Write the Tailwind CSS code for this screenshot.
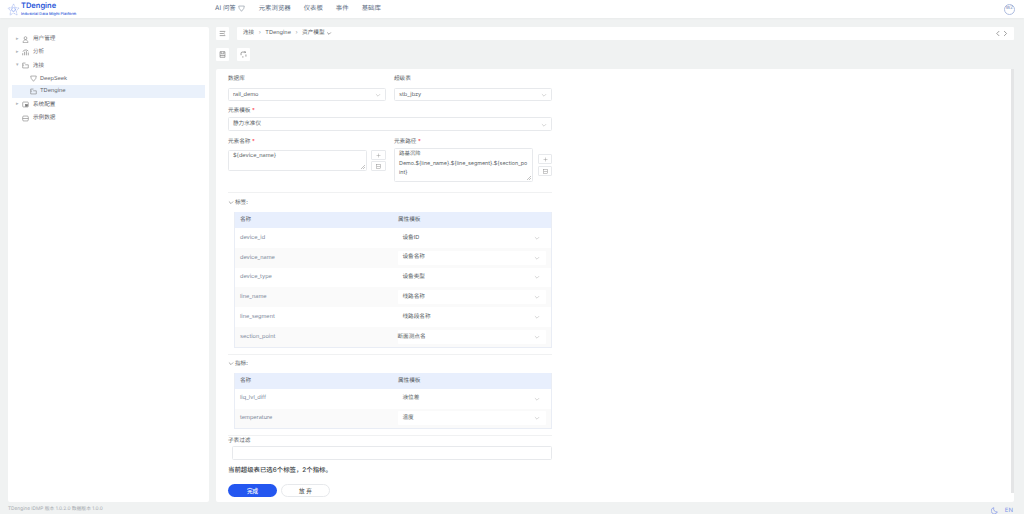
<!DOCTYPE html>
<html lang="zh">
<head>
<meta charset="UTF-8">
<title>TDengine IDMP</title>
<script src="https://cdn.jsdelivr.net/npm/@tailwindcss/browser@4"></script>
</head>
<body class="h-[514px] w-[1024px] overflow-hidden bg-[#f0f2f2] font-['Inter','Noto_Sans_CJK_SC',sans-serif] text-[5.6px] text-[#5a5f66] [text-rendering:geometricPrecision]">

<!-- header -->
<header class="flex h-[18px] items-center bg-white shadow-[0_1px_2px_rgba(0,0,0,0.03)]">
  <div class="flex w-[215px] items-center gap-[1px] pl-[7px]">
    <svg class="h-[13px] w-[13px]" viewBox="0 0 14 14" fill="none" stroke="#9fb2ee" stroke-width="0.8" stroke-dasharray="1.200 0.600"><path d="M7 1 9 5l4 .5-3 3 .8 4.500L7 10.800 3.200 13l.8-4.500-3-3L5 5z"/><circle cx="7" cy="7" r="2" stroke="#4d74ea"/></svg>
    <div class="leading-none">
      <div class="text-[7.500px] leading-[8px] font-semibold text-[#2a56d8]">TDengine</div>
      <div class="mt-[1px] text-[3.900px] leading-[5px] font-medium text-[#2a56d8]">Industrial Data Might Platform</div>
    </div>
  </div>
  <nav class="flex items-center gap-[13px] text-[6.400px] text-[#5b6b7f]">
    <span class="mr-[1px] flex items-center gap-[2px]">AI 问答
      <svg class="h-[7px] w-[7px]" viewBox="0 0 10 10" fill="none" stroke="#7b8794" stroke-width="0.8"><path d="M1 1.500h8L8.200 5 5 9 1.800 5z"/></svg>
    </span>
    <span>元素浏览器</span><span>仪表板</span><span>事件</span><span>基础库</span>
  </nav>
  <div class="ml-auto mr-[9px] flex h-[11px] w-[11px] items-center justify-center rounded-full border-[0.800px] border-[#aebde0] text-[4.500px] text-[#6f83b5]">WZ</div>
</header>

<div class="flex h-[484px] pl-[8px] pt-[9px]">
  <!-- sidebar -->
  <aside class="h-[475px] w-[201px] rounded-[2px] bg-white px-[4px] pt-[5.500px] text-[#5f646b]">
    <div class="flex h-[13px] items-center pl-[4px] pt-[1px]"><span class="w-[6px] text-[5px] text-[#b0b5ba]">▸</span>
      <svg class="mr-[4px] h-[7px] w-[7px]" viewBox="0 0 10 10" fill="none" stroke="#777" stroke-width="0.8"><circle cx="5" cy="3" r="2"/><path d="M1.500 9.500c0-2.500 1.500-4 3.500-4s3.500 1.500 3.500 4z"/></svg>用户管理</div>
    <div class="flex h-[13.500px] items-center pl-[4px]"><span class="w-[6px] text-[5px] text-[#b0b5ba]">▸</span>
      <svg class="mr-[4px] h-[7px] w-[7px]" viewBox="0 0 10 10" fill="none" stroke="#777" stroke-width="0.9"><path d="M1 9V6M3.700 9V4M6.300 9V3M9 9V5M1 3.500 4 1.500l3 0 2 1.500"/></svg>分析</div>
    <div class="flex h-[13.500px] items-center pl-[4px]"><span class="w-[6px] text-[5px] text-[#b0b5ba]">▾</span>
      <svg class="mr-[4px] h-[7px] w-[7px]" viewBox="0 0 10 10" fill="none" stroke="#777" stroke-width="0.8"><path d="M1 1.500h4M1 1.500v7h8V4H4.500M1 4.500h2"/></svg>连接</div>
    <div class="flex h-[12.500px] items-center pl-[18px]">
      <svg class="mr-[3px] h-[7px] w-[7px]" viewBox="0 0 10 10" fill="none" stroke="#777" stroke-width="0.8"><path d="M1 1.500h8L8.200 5 5 9 1.800 5z"/></svg>DeepSeek</div>
    <div class="flex h-[13px] items-center bg-[#eaf1fb] pl-[18px]">
      <svg class="mr-[3px] h-[7px] w-[7px]" viewBox="0 0 10 10" fill="none" stroke="#777" stroke-width="0.8"><path d="M1 1.500h4M1 1.500v7h8V4H4.500M1 4.500h2"/></svg>TDengine</div>
    <div class="flex h-[13.500px] items-center pl-[4px]"><span class="w-[6px] text-[5px] text-[#b0b5ba]">▸</span>
      <svg class="mr-[4px] h-[7px] w-[7px]" viewBox="0 0 10 10" fill="none" stroke="#777" stroke-width="0.8"><rect x="1" y="1.500" width="8" height="7" rx="1"/><rect x="5" y="5" width="3" height="2.500" fill="#777"/></svg>系统配置</div>
    <div class="flex h-[13.500px] items-center pl-[10px]">
      <svg class="mr-[4px] h-[7px] w-[7px]" viewBox="0 0 10 10" fill="none" stroke="#777" stroke-width="0.8"><rect x="1" y="1.500" width="8" height="7" rx="1.500"/><path d="M1 5h8"/></svg>示例数据</div>
  </aside>

  <main class="ml-[7px] w-[798px]">
    <!-- breadcrumb row -->
    <div class="flex h-[13px] gap-[8px]">
      <button class="flex w-[13px] items-center justify-center rounded-[1px] bg-white">
        <svg class="h-[7px] w-[7px]" viewBox="0 0 10 10" fill="none" stroke="#666" stroke-width="0.8"><path d="M1 2h8M1 5h5M1 8h8M8 4l-1.500 1L8 6"/></svg>
      </button>
      <div class="flex flex-1 items-center rounded-[1px] bg-white pl-[6px] pr-[5px]">
        <span>连接</span><span class="mx-[4.500px] text-[#9aa0a6]">›</span><span>TDengine</span><span class="mx-[4.500px] text-[#9aa0a6]">›</span><span>资产模型</span>
        <svg class="ml-[2px] h-[6px] w-[6px]" viewBox="0 0 10 10" fill="none" stroke="#555" stroke-width="1"><path d="M2 2.500l3 3 3-3"/></svg>
        <svg class="ml-auto h-[7px] w-[14px]" viewBox="0 0 20 10" fill="none" stroke="#777" stroke-width="1"><path d="M6 1.500 2.500 5 6 8.500M13 1.500 16.500 5 13 8.500"/></svg>
      </div>
    </div>
    <!-- toolbar -->
    <div class="mt-[8px] flex h-[13px] gap-[8px]">
      <button class="flex w-[13px] items-center justify-center rounded-[1px] bg-white">
        <svg class="h-[7px] w-[7px]" viewBox="0 0 10 10" fill="none" stroke="#666" stroke-width="0.8"><path d="M1.500 1h7v8h-7zM3 1v3h4V1M1.500 6.500h7"/></svg>
      </button>
      <button class="flex w-[13px] items-center justify-center rounded-[1px] bg-white">
        <svg class="h-[7px] w-[7px]" viewBox="0 0 10 10" fill="none" stroke="#666" stroke-width="0.9"><path d="M1.500 6V3.500A2 2 0 0 1 3.500 1.500H8M6.500.5 8 1.500 6.500 3M8.500 5v3M5 8.500H3"/></svg>
      </button>
    </div>

    <!-- form card -->
    <section class="relative mt-[8px] h-[433px] w-[798px] rounded-[2px] bg-white pl-[12px] pt-[5px]">
      <div class="absolute right-0 top-0 h-[424px] w-[3.500px] bg-[#e4e5e6]"></div>
      <div class="w-[324px]">

        <div class="flex gap-[8px]">
          <div class="w-[158px]">
            <div class="h-[14px] leading-[11px]">数据库</div>
            <div class="flex h-[13px] items-center justify-between rounded-[1.500px] border border-[#e7e9ec] px-[4px] pt-[1px]">rail_demo
              <svg class="h-[6px] w-[6px]" viewBox="0 0 10 10" fill="none" stroke="#aaa" stroke-width="0.8"><path d="M1.500 3.500 5 7l3.500-3.500"/></svg></div>
          </div>
          <div class="w-[158px]">
            <div class="h-[14px] leading-[11px]">超级表</div>
            <div class="flex h-[13px] items-center justify-between rounded-[1.500px] border border-[#e7e9ec] px-[4px] pt-[1px]">stb_jbzy
              <svg class="h-[6px] w-[6px]" viewBox="0 0 10 10" fill="none" stroke="#aaa" stroke-width="0.8"><path d="M1.500 3.500 5 7l3.500-3.500"/></svg></div>
          </div>
        </div>

        <div class="mt-[5px] h-[11px] leading-[11px]">元素模板 <span class="text-red-500">*</span></div>
        <div class="flex h-[14px] items-center justify-between rounded-[1.500px] border border-[#e7e9ec] px-[4px] pt-[1px]">静力水准仪
          <svg class="h-[6px] w-[6px]" viewBox="0 0 10 10" fill="none" stroke="#aaa" stroke-width="0.8"><path d="M1.500 3.500 5 7l3.500-3.500"/></svg></div>

        <div class="mt-[6px] flex gap-[8px]">
          <div class="w-[158px]">
            <div class="h-[12px] leading-[11px]">元素名称 <span class="text-red-500">*</span></div>
            <div class="flex">
              <div class="relative mt-[1px] h-[21px] w-[139px] rounded-[1.500px] border border-[#e7e9ec] px-[4px] pt-[1px] leading-[9px]">${device_name}
                <svg class="absolute bottom-[1px] right-[1px] h-[4px] w-[4px]" viewBox="0 0 4 4" stroke="#888" stroke-width="0.5"><path d="M0 4 4 0M2 4l2-2"/></svg></div>
              <div class="ml-[4px] mt-[1px] flex w-[15px] flex-col gap-[1px]">
                <div class="flex h-[10px] items-center justify-center rounded-[1px] border border-[#e7e9ec]"><svg class="h-[5px] w-[5px]" viewBox="0 0 10 10" stroke="#888" stroke-width="0.8"><path d="M5 1v8M1 5h8"/></svg></div>
                <div class="flex h-[10px] items-center justify-center rounded-[1px] border border-[#e7e9ec]"><svg class="h-[5px] w-[5px]" viewBox="0 0 10 10" fill="none" stroke="#888" stroke-width="0.9"><rect x="1.500" y="1.500" width="7" height="7"/><path d="M1.500 5h7"/></svg></div>
              </div>
            </div>
          </div>
          <div class="w-[158px]">
            <div class="h-[11px] leading-[11px]">元素路径 <span class="text-red-500">*</span></div>
            <div class="flex">
              <div class="relative h-[34px] w-[139px] rounded-[1.500px] border border-[#e7e9ec] px-[4px] pt-[1px] text-[5.400px] leading-[9.500px] break-all">路基沉降<br>Demo.${line_name}.${line_segment}.${section_point}
                <svg class="absolute bottom-[1px] right-[1px] h-[4px] w-[4px]" viewBox="0 0 4 4" stroke="#888" stroke-width="0.5"><path d="M0 4 4 0M2 4l2-2"/></svg></div>
              <div class="ml-[5px] mt-[6px] flex w-[14px] flex-col gap-[2px]">
                <div class="flex h-[10px] items-center justify-center rounded-[1px] border border-[#e7e9ec]"><svg class="h-[5px] w-[5px]" viewBox="0 0 10 10" stroke="#888" stroke-width="0.8"><path d="M5 1v8M1 5h8"/></svg></div>
                <div class="flex h-[10px] items-center justify-center rounded-[1px] border border-[#e7e9ec]"><svg class="h-[5px] w-[5px]" viewBox="0 0 10 10" fill="none" stroke="#888" stroke-width="0.9"><rect x="1.500" y="1.500" width="7" height="7"/><path d="M1.500 5h7"/></svg></div>
              </div>
            </div>
          </div>
        </div>

        <div class="mt-[10px] border-t border-[#f0f1f2]"></div>
        <div class="flex h-[19px] items-center pt-[1px]">
          <svg class="mr-[1px] h-[6px] w-[6px]" viewBox="0 0 10 10" fill="none" stroke="#666" stroke-width="0.9"><path d="M1.500 2.500 5 6l3.500-3.500"/></svg>标签:</div>

        <div class="ml-[6px] border-x border-b border-[#e9edf5]">
          <div class="grid h-[16px] grid-cols-[158px_1fr] items-center bg-[#e8effd] pl-[5px]"><span>名称</span><span>属性模板</span></div>
          <div class="grid h-[19.800px] grid-cols-[157.500px_1fr] items-center pl-[5px]"><span class="text-[#7a8799]">device_id</span>
            <div class="mr-[5px] flex h-[14px] items-center justify-between rounded-[1px] bg-white pl-[5px] pr-[6px]">设备ID<svg class="h-[6px] w-[6px]" viewBox="0 0 10 10" fill="none" stroke="#aaa" stroke-width="0.8"><path d="M1.500 3.500 5 7l3.500-3.500"/></svg></div></div>
          <div class="grid h-[19.800px] grid-cols-[157.500px_1fr] items-center bg-[#fafafa] pl-[5px]"><span class="text-[#7a8799]">device_name</span>
            <div class="mr-[5px] flex h-[14px] items-center justify-between rounded-[1px] bg-white pl-[5px] pr-[6px]">设备名称<svg class="h-[6px] w-[6px]" viewBox="0 0 10 10" fill="none" stroke="#aaa" stroke-width="0.8"><path d="M1.500 3.500 5 7l3.500-3.500"/></svg></div></div>
          <div class="grid h-[19.800px] grid-cols-[157.500px_1fr] items-center pl-[5px]"><span class="text-[#7a8799]">device_type</span>
            <div class="mr-[5px] flex h-[14px] items-center justify-between rounded-[1px] bg-white pl-[5px] pr-[6px]">设备类型<svg class="h-[6px] w-[6px]" viewBox="0 0 10 10" fill="none" stroke="#aaa" stroke-width="0.8"><path d="M1.500 3.500 5 7l3.500-3.500"/></svg></div></div>
          <div class="grid h-[19.800px] grid-cols-[157.500px_1fr] items-center bg-[#fafafa] pl-[5px]"><span class="text-[#7a8799]">line_name</span>
            <div class="mr-[5px] flex h-[14px] items-center justify-between rounded-[1px] bg-white pl-[5px] pr-[6px]">线路名称<svg class="h-[6px] w-[6px]" viewBox="0 0 10 10" fill="none" stroke="#aaa" stroke-width="0.8"><path d="M1.500 3.500 5 7l3.500-3.500"/></svg></div></div>
          <div class="grid h-[19.800px] grid-cols-[157.500px_1fr] items-center pl-[5px]"><span class="text-[#7a8799]">line_segment</span>
            <div class="mr-[5px] flex h-[14px] items-center justify-between rounded-[1px] bg-white pl-[5px] pr-[6px]">线路段名称<svg class="h-[6px] w-[6px]" viewBox="0 0 10 10" fill="none" stroke="#aaa" stroke-width="0.8"><path d="M1.500 3.500 5 7l3.500-3.500"/></svg></div></div>
          <div class="grid h-[19.800px] grid-cols-[157.500px_1fr] items-center bg-[#fafafa] pl-[5px]"><span class="text-[#7a8799]">section_point</span>
            <div class="mr-[5px] flex h-[14px] items-center justify-between rounded-[1px] bg-white pr-[6px]">断面测点名<svg class="h-[6px] w-[6px]" viewBox="0 0 10 10" fill="none" stroke="#aaa" stroke-width="0.8"><path d="M1.500 3.500 5 7l3.500-3.500"/></svg></div></div>
        </div>

        <div class="mt-[6px] border-t border-[#f0f1f2]"></div>
        <div class="flex h-[18px] items-center">
          <svg class="mr-[1px] h-[6px] w-[6px]" viewBox="0 0 10 10" fill="none" stroke="#666" stroke-width="0.9"><path d="M1.500 2.500 5 6l3.500-3.500"/></svg>指标:</div>

        <div class="ml-[6px] border-x border-b border-[#e9edf5]">
          <div class="grid h-[16px] grid-cols-[158px_1fr] items-center bg-[#e8effd] pl-[5px]"><span>名称</span><span>属性模板</span></div>
          <div class="grid h-[19.800px] grid-cols-[157.500px_1fr] items-center pl-[5px]"><span class="text-[#7a8799]">liq_lvl_diff</span>
            <div class="mr-[5px] flex h-[14px] items-center justify-between rounded-[1px] bg-white pl-[5px] pr-[6px]">液位差<svg class="h-[6px] w-[6px]" viewBox="0 0 10 10" fill="none" stroke="#aaa" stroke-width="0.8"><path d="M1.500 3.500 5 7l3.500-3.500"/></svg></div></div>
          <div class="grid h-[19.800px] grid-cols-[157.500px_1fr] items-center bg-[#fafafa] pl-[5px]"><span class="text-[#7a8799]">temperature</span>
            <div class="mr-[5px] flex h-[14px] items-center justify-between rounded-[1px] bg-white pl-[5px] pr-[6px]">温度<svg class="h-[6px] w-[6px]" viewBox="0 0 10 10" fill="none" stroke="#aaa" stroke-width="0.8"><path d="M1.500 3.500 5 7l3.500-3.500"/></svg></div></div>
        </div>

        <div class="mt-[6px] border-t border-[#f0f1f2]"></div>
        <div class="mt-[1px] h-[9px] leading-[9px]">子表过滤</div>
        <div class="ml-[4px] h-[14px] rounded-[1.500px] border border-[#e7e9ec]"></div>
        <div class="mt-[5px] h-[11px] text-[6.400px] leading-[11px] font-medium text-[#3a3f46]">当前超级表已选6个标签，2个指标。</div>
        <div class="mt-[8px] flex gap-[4px]">
          <button class="h-[13px] w-[49px] rounded-full bg-[#2457f0] font-medium text-white">完成</button>
          <button class="h-[13px] w-[49px] rounded-full border border-[#e7e9ec] bg-white text-[#444]">放 弃</button>
        </div>
      </div>
    </section>
  </main>
</div>

<footer class="flex h-[12px] items-center pl-[8px] pr-[11px] pt-[4px] text-[4.800px] text-[#a6abb0]">
  TDengine IDMP 版本 1.0.2.0 数据版本 1.0.0
  <svg class="ml-auto h-[7px] w-[7px]" viewBox="0 0 10 10" fill="none" stroke="#7d92e8" stroke-width="1"><path d="M4 1a4.500 4.500 0 1 0 5 6A4.500 4.500 0 0 1 4 1z"/></svg>
  <span class="ml-[7px] text-[6px] text-[#7d92e8]">EN</span>
</footer>
</body>
</html>
